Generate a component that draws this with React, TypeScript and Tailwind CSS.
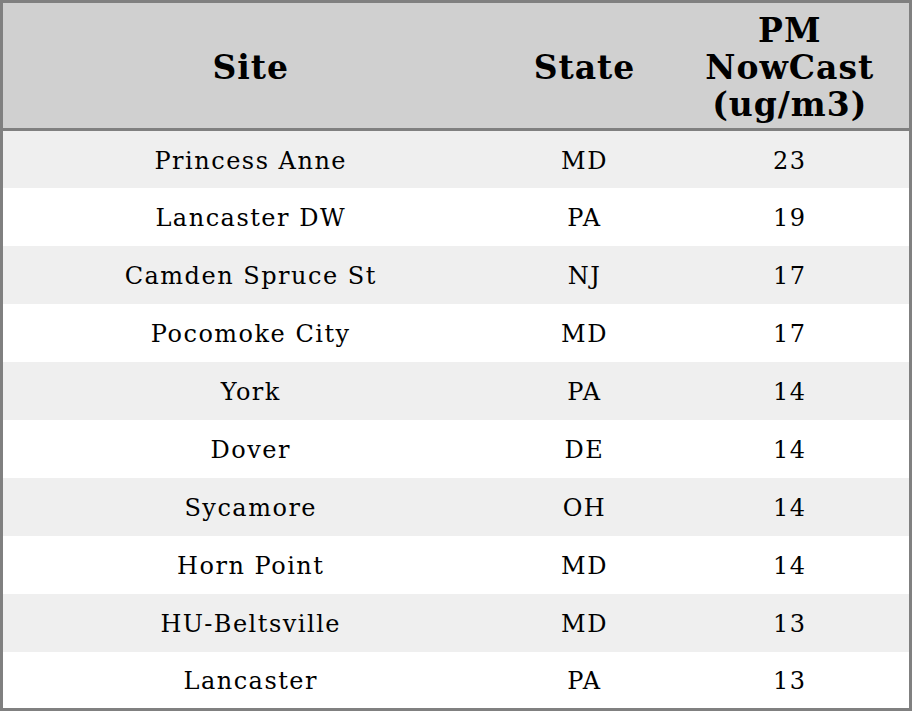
import React from "react";

const rows: [string, string, number][] = [
  ["Princess Anne", "MD", 23],
  ["Lancaster DW", "PA", 19],
  ["Camden Spruce St", "NJ", 17],
  ["Pocomoke City", "MD", 17],
  ["York", "PA", 14],
  ["Dover", "DE", 14],
  ["Sycamore", "OH", 14],
  ["Horn Point", "MD", 14],
  ["HU-Beltsville", "MD", 13],
  ["Lancaster", "PA", 13],
];

export default function App() {
  return (
    <div className="w-[912px] h-[711px] bg-white font-['DejaVu_Serif',serif] text-black">
      <table className="w-[912px] border-collapse border-[3px] border-[#808080] text-center">
        <thead>
          <tr className="bg-[#d0d0d0] h-[128px]">
            <th className="w-[497px] pt-[4px] text-[33px] tracking-[1px] font-bold leading-[37px] border-b-[3px] border-[#808080]">Site</th>
            <th className="w-[172px] pt-[4px] text-[33px] tracking-[1px] font-bold leading-[37px] border-b-[3px] border-[#808080]">State</th>
            <th className="pt-[4px] text-[33px] tracking-[1px] font-bold leading-[37px] border-b-[3px] border-[#808080]">
              PM
              <br />
              NowCast
              <br />
              (ug/m3)
            </th>
          </tr>
        </thead>
        <tbody>
          {rows.map(([site, state, val], i) => (
            <tr key={site + i} className={i % 2 === 0 ? "bg-[#efefef] h-[58px]" : "bg-white h-[58px]"}>
              <td className="pt-[3px] text-[24px] tracking-[1.5px]">{site}</td>
              <td className="pt-[3px] text-[24px] tracking-[1.5px]">{state}</td>
              <td className="pt-[3px] text-[24px] tracking-[1.5px]">{val}</td>
            </tr>
          ))}
        </tbody>
      </table>
    </div>
  );
}
